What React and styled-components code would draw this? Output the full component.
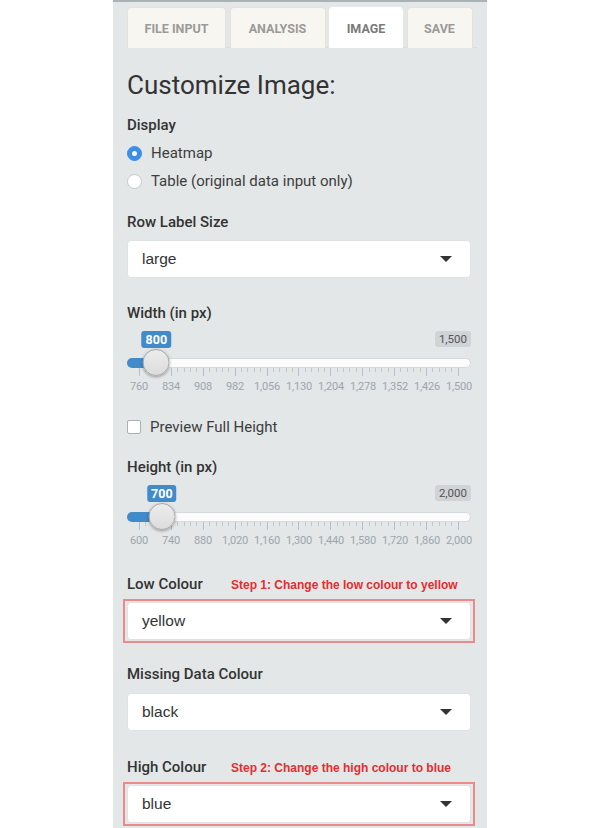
import React from "react";
import styled, { createGlobalStyle } from "styled-components";

const GlobalStyle = createGlobalStyle`
  html, body { margin: 0; padding: 0; background: #ffffff; }
  body { font-family: Roboto, "Liberation Sans", sans-serif; color: #333; }
`;

const Page = styled.div`
  display: flex;
  justify-content: center;
  width: 600px;
  height: 828px;
  overflow: hidden;
`;

const Panel = styled.div`
  width: 374px;
  box-sizing: border-box;
  background: #e3e7e8;
  border-top: 2px solid #a9b2b4;
  padding: 5px 16px 0 14px;
  display: flex;
  flex-direction: column;
`;

const TabBar = styled.div`
  display: flex;
  gap: 3.5px;
  margin-right: -6px;
  border-bottom: 1px solid #e2ddd2;
`;

const Tab = styled.div`
  width: ${(p) => p.$w}px;
  height: 41px;
  box-sizing: border-box;
  display: flex;
  align-items: center;
  justify-content: center;
  white-space: nowrap;
  font-size: 12.5px;
  font-weight: 700;
  color: ${(p) => (p.$active ? "#7a7a7a" : "#9a9a9a")};
  background: ${(p) => (p.$active ? "#ffffff" : "#f8f6f1")};
  border: 1px solid ${(p) => (p.$active ? "#ffffff" : "#e8e2d6")};
  border-bottom: none;
  border-radius: 4px 4px 0 0;
  margin-bottom: -1px;
`;

const Title = styled.h2`
  margin: 22px 0 0;
  font-size: 26px;
  line-height: 30px;
  font-weight: 400;
  color: #333;
`;

const Label = styled.div`
  margin-top: ${(p) => p.$mt}px;
  font-size: 15px;
  line-height: 20px;
  font-weight: 500;
  color: #333;
`;

const LabelLine = styled.div`
  display: grid;
  grid-template-columns: 104px 1fr;
  align-items: baseline;
  margin-top: ${(p) => p.$mt}px;
`;

const Note = styled.span`
  font-family: "Liberation Sans", Arial, sans-serif;
  font-size: 12px;
  font-weight: 700;
  color: #e42d2f;
`;

const Options = styled.div`
  display: flex;
  flex-direction: column;
  gap: 8px;
  margin-top: 8px;
`;

const OptionRow = styled.label`
  display: flex;
  align-items: center;
  gap: 9px;
  font-size: 15px;
  line-height: 20px;
  color: #3d3d3d;
  margin-top: ${(p) => p.$mt || 0}px;
`;

const Radio = styled.span`
  width: 15px;
  height: 15px;
  box-sizing: border-box;
  border-radius: 50%;
  background: ${(p) => (p.$checked ? "#3c8ee6" : "#ffffff")};
  border: 1px solid ${(p) => (p.$checked ? "#3c8ee6" : "#c4c8ca")};
  display: flex;
  align-items: center;
  justify-content: center;
  flex-shrink: 0;
  &::after {
    content: "";
    width: 5px;
    height: 5px;
    border-radius: 50%;
    background: #ffffff;
    display: ${(p) => (p.$checked ? "block" : "none")};
  }
`;

const Checkbox = styled.span`
  width: 14px;
  height: 14px;
  box-sizing: border-box;
  border-radius: 2px;
  background: #ffffff;
  border: 1px solid #aab0b3;
  flex-shrink: 0;
`;

const SelectBox = styled.div`
  margin-top: ${(p) => p.$mt || 0}px;
  height: 38px;
  box-sizing: border-box;
  background: #ffffff;
  border: 1px solid #e0e3e4;
  border-radius: 4px;
  display: flex;
  align-items: center;
  justify-content: space-between;
  padding: 0 18px 0 14px;
  font-family: "Liberation Sans", Arial, sans-serif;
  font-size: 15.5px;
  color: #333;
`;

const Caret = styled.span`
  width: 0;
  height: 0;
  border-left: 6px solid transparent;
  border-right: 6px solid transparent;
  border-top: 6px solid #333;
`;

const Highlight = styled.div`
  margin: ${(p) => p.$mt}px -4px 0;
  border: 2px solid #ea8a8b;
  padding: 1px 2px;
`;

const SliderWrap = styled.div`
  margin-top: 8px;
  display: flex;
  flex-direction: column;
`;

const BadgeRow = styled.div`
  position: relative;
  height: 17px;
  display: flex;
  justify-content: flex-end;
`;

const ValueBadge = styled.span`
  position: absolute;
  top: 0;
  transform: translateX(-50%);
  height: 17px;
  padding: 0 4px;
  border-radius: 3px;
  background: #428bca;
  color: #ffffff;
  font-size: 12.5px;
  font-weight: 700;
  line-height: 17px;
`;

const MaxBadge = styled.span`
  height: 16px;
  padding: 0 4px;
  border-radius: 3px;
  background: #d0d4d6;
  color: #555;
  font-size: 11.5px;
  line-height: 16px;
`;

const TrackRow = styled.div`
  position: relative;
  height: 10px;
  margin-top: 10px;
`;

const Track = styled.div`
  height: 10px;
  box-sizing: border-box;
  border-radius: 5px;
  background: #fbfbfb;
  border: 1px solid #d6dadc;
`;

const Bar = styled.div`
  position: absolute;
  left: 0;
  top: 0;
  height: 10px;
  border-radius: 5px 0 0 5px;
  background: #428bca;
`;

const Handle = styled.div`
  position: absolute;
  top: -9px;
  width: 27px;
  height: 27px;
  box-sizing: border-box;
  transform: translateX(-50%);
  border-radius: 50%;
  background: linear-gradient(#ececec, #dcdcdc);
  border: 1px solid #a9a9a9;
  box-shadow: 0 1px 3px rgba(0, 0, 0, 0.35);
`;

const Ticks = styled.div`
  display: flex;
  justify-content: space-between;
  padding: 0 12px;
  height: 8px;
`;

const Tick = styled.span`
  width: 1px;
  height: ${(p) => (p.$major ? 8 : 4)}px;
  background: ${(p) => (p.$major ? "#a9c1d9" : "#c3c7ca")};
`;

const TickLabels = styled.div`
  display: flex;
  margin: 4px -4px 0;
`;

const TickLabel = styled.span`
  flex: 1;
  text-align: center;
  font-size: 11px;
  line-height: 14px;
  color: #9ba6ad;
  letter-spacing: -0.2px;
`;

const fmt = (n) => n.toLocaleString("en-US");

const Slider = ({ min, max, value }) => {
  const step = (max - min) / 10;
  const labels = Array.from({ length: 11 }, (_, i) => min + i * step);
  const pos = 12 + ((value - min) / (max - min)) * 320;
  return (
    <SliderWrap>
      <BadgeRow>
        <ValueBadge style={{ left: pos }}>{fmt(value)}</ValueBadge>
        <MaxBadge>{fmt(max)}</MaxBadge>
      </BadgeRow>
      <TrackRow>
        <Track />
        <Bar style={{ width: pos }} />
        <Handle style={{ left: pos }} />
      </TrackRow>
      <Ticks>
        {Array.from({ length: 51 }, (_, i) => (
          <Tick key={i} $major={i % 5 === 0} />
        ))}
      </Ticks>
      <TickLabels>
        {labels.map((l) => (
          <TickLabel key={l}>{fmt(l)}</TickLabel>
        ))}
      </TickLabels>
    </SliderWrap>
  );
};

const Select = ({ value, mt }) => (
  <SelectBox $mt={mt}>
    <span>{value}</span>
    <Caret />
  </SelectBox>
);

const tabs = [
  { name: "FILE INPUT", w: 99 },
  { name: "ANALYSIS", w: 96 },
  { name: "IMAGE", w: 74, active: true },
  { name: "SAVE", w: 66 },
];

export default function App() {
  return (
    <Page>
      <GlobalStyle />
      <Panel>
        <TabBar>
          {tabs.map((t) => (
            <Tab key={t.name} $active={t.active} $w={t.w}>
              {t.name}
            </Tab>
          ))}
        </TabBar>

        <Title>Customize Image:</Title>

        <Label $mt={15}>Display</Label>
        <Options>
          <OptionRow>
            <Radio $checked />
            Heatmap
          </OptionRow>
          <OptionRow>
            <Radio />
            Table (original data input only)
          </OptionRow>
        </Options>

        <Label $mt={21}>Row Label Size</Label>
        <Select value="large" mt={8} />

        <Label $mt={25}>Width (in px)</Label>
        <Slider min={760} max={1500} value={800} />

        <OptionRow $mt={23}>
          <Checkbox />
          Preview Full Height
        </OptionRow>

        <Label $mt={20}>Height (in px)</Label>
        <Slider min={600} max={2000} value={700} />

        <LabelLine $mt={26}>
          <Label $mt={0}>Low Colour</Label>
          <Note>Step 1: Change the low colour to yellow</Note>
        </LabelLine>
        <Highlight $mt={5}>
          <Select value="yellow" />
        </Highlight>

        <Label $mt={21}>Missing Data Colour</Label>
        <Select value="black" mt={9} />

        <LabelLine $mt={26}>
          <Label $mt={0}>High Colour</Label>
          <Note>Step 2: Change the high colour to blue</Note>
        </LabelLine>
        <Highlight $mt={5}>
          <Select value="blue" />
        </Highlight>
      </Panel>
    </Page>
  );
}
